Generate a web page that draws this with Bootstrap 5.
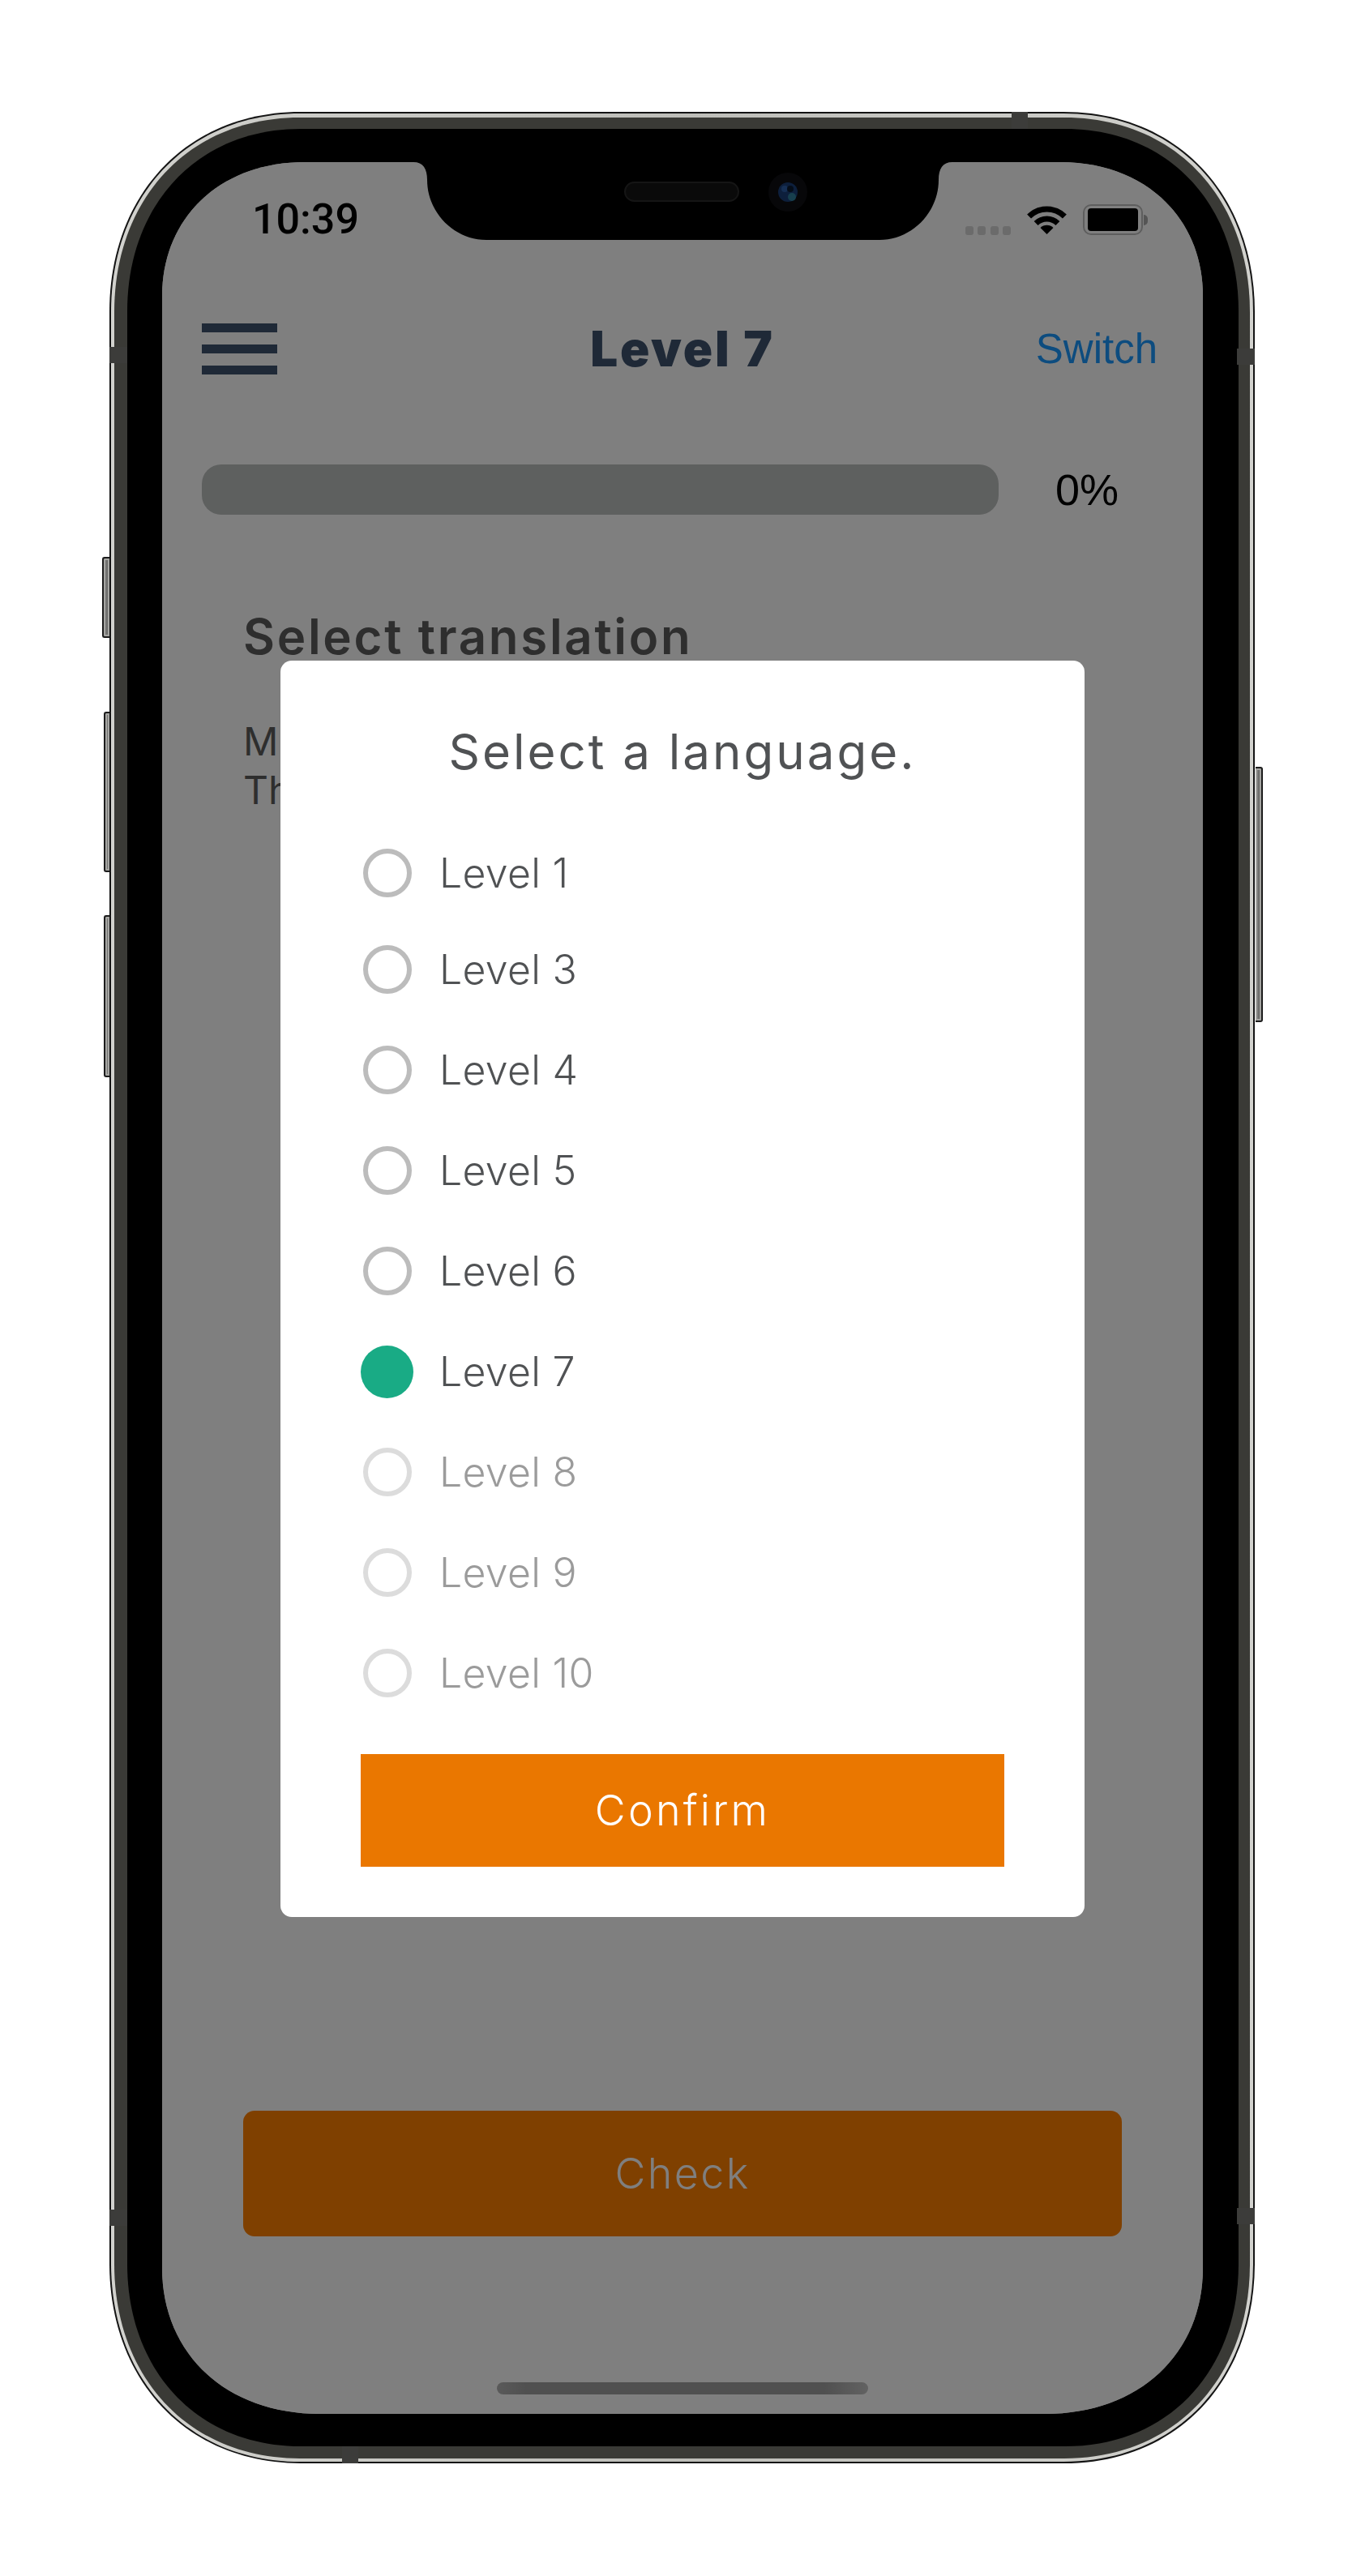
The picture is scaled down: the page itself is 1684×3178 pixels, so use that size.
<!DOCTYPE html>
<html lang="en">
<head>
    <meta charset="UTF-8">
    <meta name="viewport" content="width=device-width, initial-scale=1.0">
    <title>Level 7</title>
    <link rel="stylesheet" href="https://cdn.jsdelivr.net/npm/bootstrap@5.3.0/dist/css/bootstrap.min.css">
    <style>
        body {
            background-color: #fff;
            padding: 138px 0 0 135px;
            min-height: 3178px;
            font-family: "Inter", "Liberation Sans", sans-serif;
        }
        /* phone frame, layer by layer from the outside in */
        .shell {
            position: relative;
            width: 1413px;
            height: 2901px;
        }
        .shell-line {
            height: 100%;
            padding: 2px;
            background-color: #141414;
            clip-path: path("M0 247C0 104 94 0 236 0H1177C1319 0 1413 104 1413 247V2654C1413 2797 1319 2901 1177 2901H236C94 2901 0 2797 0 2654Z");
        }
        .shell-edge {
            height: 100%;
            padding: 5px 4px 4px 4px;
            background: linear-gradient(90deg, #d2d2ce, #bdbdb8 50%, #d2d2ce);
            clip-path: path("M0 245C0 103 93 0 234 0H1175C1316 0 1409 103 1409 245V2652C1409 2794 1316 2897 1175 2897H234C93 2897 0 2794 0 2652Z");
        }
        .shell-band {
            height: 100%;
            padding: 14px 14px 15px 16px;
            background-color: #3a3a36;
            clip-path: path("M0 240C0 101 91 0 229 0H1172C1310 0 1401 101 1401 240V2648C1401 2787 1310 2888 1172 2888H229C91 2888 0 2787 0 2648Z");
        }
        .bezel {
            height: 100%;
            padding: 41px 44px 40px 43px;
            background-color: #000;
            clip-path: path("M0 225C0 95 85 0 214 0H1157C1286 0 1371 95 1371 225V2634C1371 2764 1286 2859 1157 2859H214C85 2859 0 2764 0 2634Z");
        }
        .side-key {
            position: absolute;
            background: linear-gradient(90deg, #8a8a88, #5a5a58);
            border: 2px solid #1c1c1c;
            box-shadow: inset 0 0 0 2px #a5a5a2;
        }
        .key-left { border-right: 0; border-radius: 3px 0 0 3px; width: 9px; left: -9px; }
        .key-right { border-left: 0; border-radius: 0 3px 3px 0; width: 9px; right: -10px; top: 808px; height: 315px; }
        .key-mute { top: 549px; height: 100px; }
        .key-up { top: 740px; height: 198px; width: 7px; left: -7px; }
        .key-down { top: 991px; height: 200px; width: 7px; left: -7px; }
        .antenna {
            position: absolute;
            background-color: #3c3c3a;
        }
        .antenna-side { width: 22px; height: 20px; }
        .antenna-flat { width: 20px; height: 21px; }

        .screen {
            position: relative;
            width: 1284px;
            height: 2778px;
            overflow: hidden;
            background-color: #fff;
            clip-path: path("M0 165C0 70 70 0 176 0H1108C1214 0 1284 70 1284 165V2598C1284 2703 1206 2778 1089 2778H195C78 2778 0 2703 0 2598Z");
            color: #5c5c5c;
        }
        .notch {
            position: absolute;
            top: 0;
            left: 310px;
            z-index: 5;
        }
        .speaker {
            position: absolute;
            top: 24px;
            left: 570px;
            width: 142px;
            height: 25px;
            z-index: 6;
            background-color: #141414;
            border: 2px solid #2b2b2b;
            border-radius: 13px;
        }
        .camera {
            position: absolute;
            top: 13px;
            left: 748px;
            width: 48px;
            height: 48px;
            z-index: 6;
        }
        .status-row {
            height: 150px;
            padding: 0 67px 0 111px;
        }
        .clock {
            margin-top: 45px;
            font: 500 52px/1 "Roboto", "Liberation Sans", sans-serif;
            color: #000;
        }
        .status-icons {
            margin-top: 52px;
            gap: 20px;
        }
        .dots { gap: 5.5px; }
        .dots i {
            display: block;
            width: 10px;
            height: 11px;
            background-color: #d6d6d6;
            border-radius: 3px;
        }
        .battery {
            position: relative;
            width: 74px;
            height: 38px;
            margin-right: 7px;
            padding: 3px 4px;
            border: 2px solid #bcbcbc;
            border-radius: 10px;
        }
        .battery::before {
            content: "";
            display: block;
            height: 100%;
            background-color: #000;
            border-radius: 4px;
        }
        .battery::after {
            content: "";
            position: absolute;
            top: 11px;
            right: -8px;
            width: 5px;
            height: 13px;
            background-color: #aaa;
            border-radius: 0 6px 6px 0;
        }
        .nav-row {
            display: grid;
            grid-template-columns: 1fr auto 1fr;
            align-items: center;
            height: 160px;
            padding: 0 49px;
        }
        .burger {
            width: 93px;
        }
        .burger span {
            display: block;
            height: 11px;
            margin-bottom: 15px;
            background-color: #3e526e;
        }
        .burger span:last-child { margin-bottom: 0; }
        .level-title {
            margin: 0;
            font-size: 60px;
            font-weight: 900;
            line-height: 1;
            letter-spacing: 2.8px;
            color: #3e526e;
        }
        .switch-link {
            justify-self: end;
            margin-right: 7px;
            font: 51px/1 "Liberation Sans", sans-serif;
            color: #1a98ff;
            text-decoration: none;
        }
        .progress-row {
            margin-top: 63px;
            padding-left: 49px;
        }
        .track {
            width: 983px;
            height: 62px;
            background-color: #bcc0be;
            border-radius: 24px;
        }
        .percent {
            margin-left: 70px;
            font: 54px/1 "Liberation Sans", sans-serif;
            color: #000;
        }
        .question {
            padding: 0 100px;
            margin-top: 120px;
        }
        .question h2 {
            margin: 0 0 70px;
            font-size: 60px;
            font-weight: 600;
            line-height: 1;
            letter-spacing: 2.7px;
            color: #5c5c5c;
        }
        .question p {
            margin: 0;
            font-size: 48px;
            line-height: 60px;
            color: #5c5c5c;
        }
        .check-btn {
            --bs-btn-disabled-color: #fff;
            --bs-btn-disabled-bg: #ff8000;
            --bs-btn-disabled-opacity: 1;
            width: 1084px;
            height: 155px;
            margin: auto 0 0 100px;
            font-size: 52px;
            font-weight: 300;
            letter-spacing: 2.4px;
            border: 0;
            border-radius: 14px;
        }
        .home-bar {
            width: 458px;
            height: 15px;
            margin: 180px auto 24px;
            background: linear-gradient(90deg, #b4b4b4, #a0a0a0 8%, #a0a0a0 88%, #c4c4c4);
            border-radius: 8px;
        }
        /* dimmed layer and the language dialog on top of it */
        .dim {
            position: absolute;
            inset: 0;
            z-index: 10;
            background-color: rgba(0, 0, 0, .5);
        }
        .lang-dialog {
            position: absolute;
            top: 615px;
            left: 146px;
            z-index: 11;
            width: 992px;
            padding: 82px 99px 62px;
            background-color: #fff;
            border: 0;
            border-radius: 14px;
        }
        .lang-dialog h3 {
            margin: 0 0 58px;
            font-size: 60px;
            font-weight: 400;
            line-height: 1;
            letter-spacing: 3px;
            text-align: center;
            color: #505254;
        }
        .level-row {
            height: 124px;
            gap: 32px;
        }
        .level-row:first-child { margin-bottom: -5px; }
        .radio-slot {
            width: 65px;
            height: 65px;
        }
        .level-row .form-check-input {
            width: 60px;
            height: 60px;
            margin: 0;
            border: 6px solid #bcbcbc;
            background-color: #fff;
            box-shadow: none;
            opacity: 1;
            filter: blur(.7px);
        }
        .level-row .form-check-input:checked {
            width: 65px;
            height: 65px;
            background-color: #19ab85;
            background-image: none;
            border: 0;
            filter: none;
        }
        .level-row .form-check-input:disabled { border-color: #dcdcdc; }
        .level-row .form-check-label {
            font-size: 50px;
            font-weight: 300;
            letter-spacing: .3px;
            color: #505254;
        }
        .level-row.level-off .form-check-label { color: #9b9b9b; }
        .confirm-btn {
            height: 139px;
            margin-top: 38px;
            font-size: 52px;
            font-weight: 300;
            letter-spacing: 3.2px;
            color: #fff;
            background-color: #ea7700;
            border: 0;
            border-radius: 0;
        }
    </style>
</head>
<body>
    <div class="shell">
        <div class="side-key key-left key-mute"></div>
        <div class="side-key key-left key-up"></div>
        <div class="side-key key-left key-down"></div>
        <div class="side-key key-right"></div>

        <div class="shell-line">
        <div class="shell-edge">
            <div class="shell-band">
                <div class="bezel">
                    <div class="screen d-flex flex-column">
                        <svg class="notch" width="665" height="96" viewBox="0 0 665 96">
                            <path d="M0 0C12 0 17 8 17 22C17 62 50 96 90 96H575C615 96 648 62 648 22C648 8 653 0 665 0Z" fill="#000"/>
                        </svg>
                        <div class="speaker"></div>
                        <svg class="camera" viewBox="0 0 48 48">
                            <circle cx="24" cy="24" r="24" fill="#0e0e12"/>
                            <circle cx="24" cy="24" r="12" fill="#1a3f78"/>
                            <circle cx="29" cy="30" r="5" fill="#2f7f9c"/>
                            <circle cx="20" cy="20" r="4" fill="#2d5fa8"/>
                            <circle cx="27" cy="20" r="4" fill="#0b1a30"/>
                        </svg>

                        <div class="status-row d-flex justify-content-between align-items-start">
                            <span class="clock">10:39</span>
                            <div class="status-icons d-flex align-items-end">
                                <div class="dots d-flex"><i></i><i></i><i></i><i></i></div>
                                <svg width="49" height="37" viewBox="0 0 49 37" fill="none" stroke="#000" stroke-width="7">
                                    <path d="M2.6 14.1A31 31 0 0 1 46.4 14.1"/>
                                    <path d="M11.1 22.6A19 19 0 0 1 37.9 22.6"/>
                                    <path d="M16.5 28A11.3 11.3 0 0 1 32.5 28L24.5 36Z" fill="#000" stroke="none"/>
                                </svg>
                                <div class="battery"></div>
                            </div>
                        </div>

                        <div class="nav-row">
                            <div class="burger"><span></span><span></span><span></span></div>
                            <h1 class="level-title">Level 7</h1>
                            <a href="#" class="switch-link">Switch</a>
                        </div>

                        <div class="progress-row d-flex align-items-center">
                            <div class="progress track" role="progressbar" aria-valuenow="0" aria-valuemin="0" aria-valuemax="100">
                                <div class="progress-bar" style="width: 0%"></div>
                            </div>
                            <span class="percent">0%</span>
                        </div>

                        <div class="question">
                            <h2>Select translation</h2>
                            <p>M<br>Th</p>
                        </div>

                        <button class="btn check-btn" disabled>Check</button>
                        <div class="home-bar"></div>

                        <div class="dim"></div>

                        <div class="modal-content lang-dialog">
                            <h3>Select a language.</h3>
                            <form>
                                <div>
                                    <div class="level-row d-flex align-items-center">
                                        <div class="radio-slot d-flex align-items-center justify-content-center"><input class="form-check-input" type="radio" name="level" id="lv1"></div>
                                        <label class="form-check-label" for="lv1">Level 1</label>
                                    </div>
                                    <div class="level-row d-flex align-items-center">
                                        <div class="radio-slot d-flex align-items-center justify-content-center"><input class="form-check-input" type="radio" name="level" id="lv3"></div>
                                        <label class="form-check-label" for="lv3">Level 3</label>
                                    </div>
                                    <div class="level-row d-flex align-items-center">
                                        <div class="radio-slot d-flex align-items-center justify-content-center"><input class="form-check-input" type="radio" name="level" id="lv4"></div>
                                        <label class="form-check-label" for="lv4">Level 4</label>
                                    </div>
                                    <div class="level-row d-flex align-items-center">
                                        <div class="radio-slot d-flex align-items-center justify-content-center"><input class="form-check-input" type="radio" name="level" id="lv5"></div>
                                        <label class="form-check-label" for="lv5">Level 5</label>
                                    </div>
                                    <div class="level-row d-flex align-items-center">
                                        <div class="radio-slot d-flex align-items-center justify-content-center"><input class="form-check-input" type="radio" name="level" id="lv6"></div>
                                        <label class="form-check-label" for="lv6">Level 6</label>
                                    </div>
                                    <div class="level-row d-flex align-items-center">
                                        <div class="radio-slot d-flex align-items-center justify-content-center"><input class="form-check-input" type="radio" name="level" id="lv7" checked></div>
                                        <label class="form-check-label" for="lv7">Level 7</label>
                                    </div>
                                    <div class="level-row level-off d-flex align-items-center">
                                        <div class="radio-slot d-flex align-items-center justify-content-center"><input class="form-check-input" type="radio" name="level" id="lv8" disabled></div>
                                        <label class="form-check-label" for="lv8">Level 8</label>
                                    </div>
                                    <div class="level-row level-off d-flex align-items-center">
                                        <div class="radio-slot d-flex align-items-center justify-content-center"><input class="form-check-input" type="radio" name="level" id="lv9" disabled></div>
                                        <label class="form-check-label" for="lv9">Level 9</label>
                                    </div>
                                    <div class="level-row level-off d-flex align-items-center">
                                        <div class="radio-slot d-flex align-items-center justify-content-center"><input class="form-check-input" type="radio" name="level" id="lv10" disabled></div>
                                        <label class="form-check-label" for="lv10">Level 10</label>
                                    </div>
                                </div>
                                <button type="button" class="btn confirm-btn w-100">Confirm</button>
                            </form>
                        </div>
                    </div>
                </div>
            </div>
        </div>
        </div>

        <div class="antenna antenna-side" style="top: 290px; left: 0"></div>
        <div class="antenna antenna-side" style="top: 292px; right: 0"></div>
        <div class="antenna antenna-side" style="top: 2588px; left: 0"></div>
        <div class="antenna antenna-side" style="top: 2586px; right: 0"></div>
        <div class="antenna antenna-flat" style="top: 0; left: 1113px"></div>
        <div class="antenna antenna-flat" style="bottom: 0; left: 287px"></div>
    </div>
    <script src="https://cdn.jsdelivr.net/npm/bootstrap@5.3.0/dist/js/bootstrap.bundle.min.js"></script>
</body>
</html>
